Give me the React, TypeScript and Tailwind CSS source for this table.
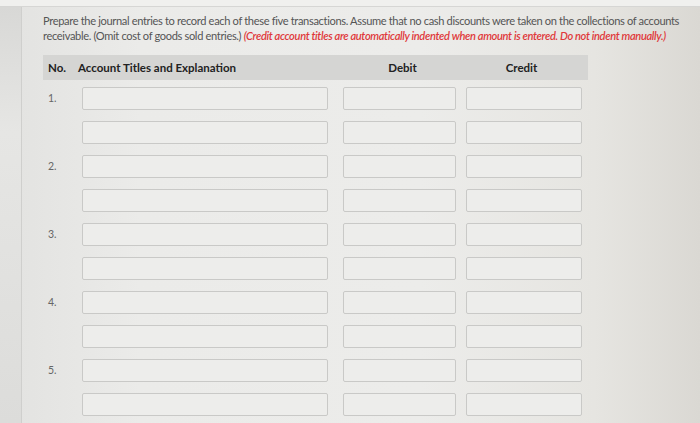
import React from 'react';

const rows = [1, 2, 3, 4, 5];

function Entry({ n }: { n: number | null }) {
  return (
    <div className="grid grid-cols-[39px_246px_113px_116px] h-[34px] items-start">
      <div className="pl-[5px] pt-[6px] text-[10.5px] text-[#666] leading-none">{n ? `${n}.` : ''}</div>
      <div className="h-[23px] border border-[#c9c9c7] rounded-[2px] bg-[#ededeb]" />
      <div className="ml-[15px] w-[113px] h-[23px] border border-[#c9c9c7] rounded-[2px] bg-[#ededeb]" />
      <div className="ml-[25px] w-[116px] h-[23px] border border-[#c9c9c7] rounded-[2px] bg-[#ededeb]" />
    </div>
  );
}

export default function App() {
  return (
    <div
      className="w-[700px] h-[423px] overflow-hidden flex flex-col bg-[linear-gradient(90deg,#e2e2e0_0%,#ebebe9_20%,#ececea_60%,#e6e5e1_85%,#dad8d3_100%)]"
      style={{ fontFamily: 'Lato, "Open Sans", sans-serif' }}
    >
      {/* top strip */}
      <div className="h-[7px] shrink-0 bg-[#f0f0ee] border-b border-[#d6d6d4]" />
      <div className="flex flex-1 min-h-0">
        {/* left strip */}
        <div className="w-[22px] shrink-0 bg-[linear-gradient(180deg,#d8d8d6,#e6e6e4_30%,#dcdcda)] border-r border-[#cfcfcd]" />
        <div className="flex-1 pl-[21px] pt-[6px]">
          <p className="text-[11.1px] leading-[15px] text-[#555] tracking-[-0.35px] whitespace-nowrap">
            Prepare the journal entries to record each of these five transactions. Assume that no cash discounts were taken on the collections of accounts
            <br />
            receivable. (Omit cost of goods sold entries.){' '}
            <span className="italic font-semibold text-[#e0393b]">
              (Credit account titles are automatically indented when amount is entered. Do not indent manually.)
            </span>
          </p>

          <div className="mt-[12px] w-[545px] h-[25px] bg-[#d5d5d3] grid grid-cols-[35px_264px_113px_133px] items-center text-[11.5px] font-bold text-[#222]">
            <div className="pl-[5px]">No.</div>
            <div>Account Titles and Explanation</div>
            <div className="text-center pl-[8px]">Debit</div>
            <div className="text-center">Credit</div>
          </div>

          <div className="mt-[7px] flex flex-col">
            {rows.map((n) => (
              <React.Fragment key={n}>
                <Entry n={n} />
                <Entry n={null} />
              </React.Fragment>
            ))}
          </div>
        </div>
      </div>
    </div>
  );
}
